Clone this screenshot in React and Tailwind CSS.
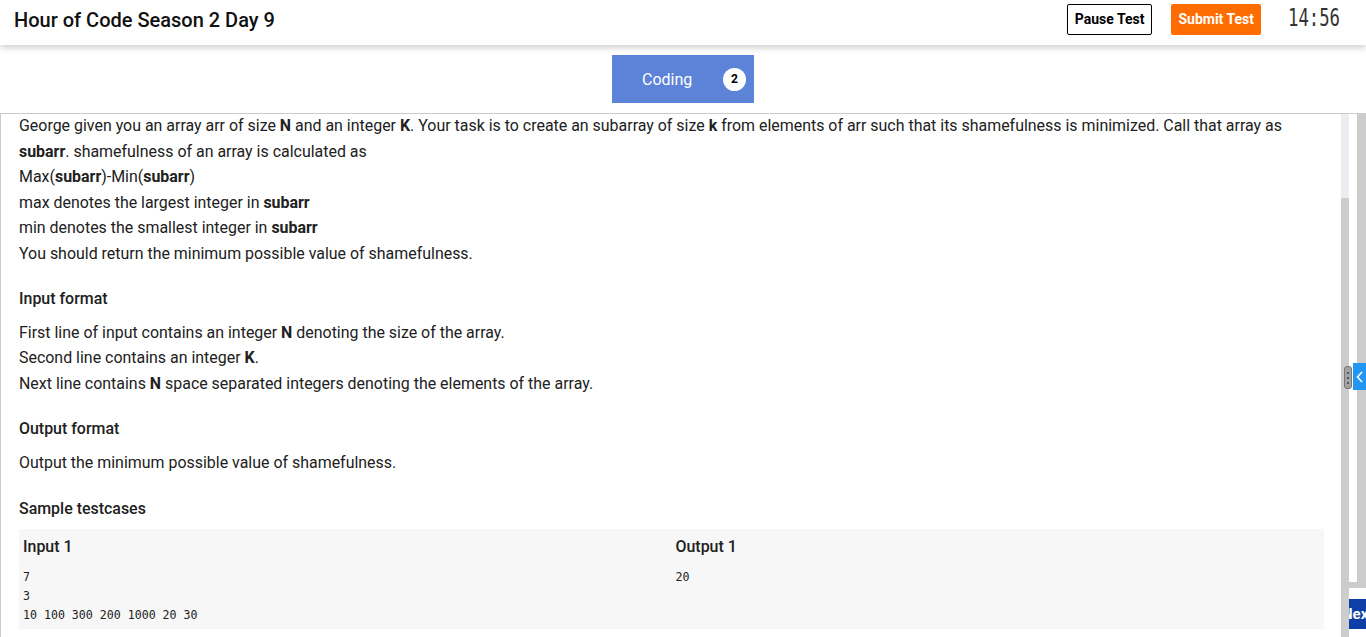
import React from "react";

const B = ({ children }) => <span className="font-bold">{children}</span>;

const Header = () => (
  <header className="relative z-10 flex h-[45px] items-center justify-between bg-white pb-[6px] pl-[14px] pr-[26px] shadow-[0_3px_6px_rgba(0,0,0,0.18)]">
    <h1 className="text-[20px] font-medium text-[#111]">Hour of Code Season 2 Day 9</h1>
    <div className="flex items-center">
      <button className="h-[31px] rounded-[2px] border border-black px-[7px] text-[14px] font-bold text-black">
        Pause Test
      </button>
      <button className="ml-[19px] h-[31px] rounded-[2px] bg-[#ff6d00] px-[7px] text-[14px] font-bold text-white">
        Submit Test
      </button>
      <span className="ml-[27px] inline-block w-[52px] overflow-visible">
        <span className="inline-block origin-left scale-x-[0.72] font-['DejaVu_Sans_Mono',monospace] text-[24px] font-light leading-none text-[#333]">
          14:56
        </span>
      </span>
    </div>
  </header>
);

const Tabs = () => (
  <div className="flex h-[69px] items-start justify-center border-b border-[#cccccc] pt-[10px]">
    <div className="flex h-[48px] w-[142px] items-center bg-[#5c83d8] pl-[30px] pr-[8px]">
      <span className="flex-1 pt-[1px] text-[16px] text-white">Coding</span>
      <span className="flex h-[23px] w-[23px] items-center justify-center rounded-full bg-white text-[12px] font-bold text-black">
        2
      </span>
    </div>
  </div>
);

const Problem = () => (
  <div className="flex-1 border-l border-[#cccccc] pl-[18px] pr-[17px] text-[15.95px] leading-[25.5px] text-[#212121]">
    <div className="-mt-[1px]">
      <p>
        George given you an array arr of size <B>N</B> and an integer <B>K</B>. Your task is to create an subarray of size <B>k</B> from elements of arr such that its shamefulness is minimized. Call that array as <B>subarr</B>. shamefulness of an array is calculated as
      </p>
      <p>
        Max(<B>subarr</B>)-Min(<B>subarr</B>)
      </p>
      <p>
        max denotes the largest integer in <B>subarr</B>
      </p>
      <p>
        min denotes the smallest integer in <B>subarr</B>
      </p>
      <p>You should return the minimum possible value of shamefulness.</p>

      <h3 className="mt-[20px] font-medium">Input format</h3>
      <p className="mt-[8px]">
        First line of input contains an integer <B>N</B> denoting the size of the array.
      </p>
      <p>
        Second line contains an integer <B>K</B>.
      </p>
      <p>
        Next line contains <B>N</B> space separated integers denoting the elements of the array.
      </p>

      <h3 className="mt-[20px] font-medium">Output format</h3>
      <p className="mt-[8px]">Output the minimum possible value of shamefulness.</p>

      <h3 className="mt-[21px] font-medium">Sample testcases</h3>
      <div className="mt-[7px] grid grid-cols-2 bg-[#f7f7f7] px-[4px] pb-[4px] pt-[5px]">
        <div>
          <div className="font-medium leading-[26px]">Input 1</div>
          <pre className="mt-[8px] font-['DejaVu_Sans_Mono',monospace] text-[11.6px] leading-[19px] text-[#222]">
{`7
3
10 100 300 200 1000 20 30`}
          </pre>
        </div>
        <div className="pl-[4px]">
          <div className="font-medium leading-[26px]">Output 1</div>
          <pre className="mt-[8px] font-['DejaVu_Sans_Mono',monospace] text-[11.6px] leading-[19px] text-[#222]">20</pre>
        </div>
      </div>
    </div>
  </div>
);

const SideRail = () => (
  <div className="relative flex w-[25px] shrink-0">
    {/* scrollbar */}
    <div className="flex w-[8px] flex-col">
      <div className="h-[84px] bg-[#ebedf0]" />
      <div className="flex-1 bg-[#cdcdcd]" />
    </div>
    <div className="flex w-[17px] flex-col">
      <div className="flex h-[468px]">
        <div className="w-[8px] bg-white" />
        <div className="w-[9px] bg-[#cccccc]" />
      </div>
      <div className="ml-[-8px] h-[6px] bg-[#cccccc]" />
      <div className="flex-1 bg-white pt-[11px]">
        <div className="flex h-[30px] items-center overflow-hidden whitespace-nowrap bg-[#0d3fa6] text-[15px] font-bold text-white">
          <span className="-ml-[7px]">Next</span>
        </div>
      </div>
    </div>

    {/* collapse handle */}
    <div className="absolute left-[3px] top-[252px] flex h-[23px] w-[8px] flex-col items-center justify-center gap-[3px] rounded-[3px] border border-[#777] bg-[#a3a3a3]">
      <span className="h-[2px] w-[2px] bg-[#555]" />
      <span className="h-[2px] w-[2px] bg-[#555]" />
      <span className="h-[2px] w-[2px] bg-[#555]" />
    </div>
    <div className="absolute left-[12px] top-[249px] flex h-[27px] w-[13px] items-center justify-center bg-[#2196f3]">
      <svg width="8" height="12" viewBox="0 0 8 12" fill="none">
        <path d="M6 1L1.5 6L6 11" stroke="white" strokeWidth="1.6" />
      </svg>
    </div>
  </div>
);

export default function App() {
  return (
    <div className="flex h-[637px] flex-col overflow-hidden bg-white font-['Roboto',sans-serif]">
      <Header />
      <Tabs />
      <div className="flex min-h-0 flex-1">
        <Problem />
        <SideRail />
      </div>
    </div>
  );
}
